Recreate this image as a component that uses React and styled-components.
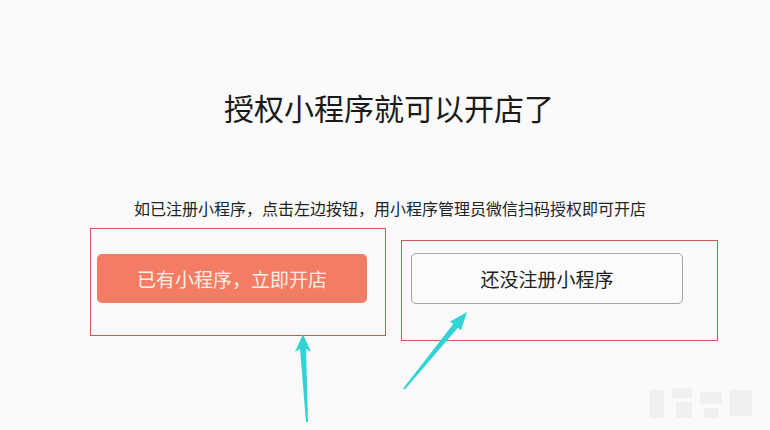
import styled, { createGlobalStyle } from "styled-components";

const GlobalStyle = createGlobalStyle`
  html, body {
    margin: 0;
    padding: 0;
    background: #fafafa;
  }
  body {
    font-family: "Noto Sans CJK SC", "Noto Sans", sans-serif;
  }
`;

const Page = styled.div`
  position: relative;
  width: 770px;
  height: 430px;
  overflow: hidden;
  background: #fafafa;
  display: flex;
  flex-direction: column;
  align-items: center;
  padding-top: 89px;
  box-sizing: border-box;
`;

const Title = styled.h1`
  margin: 0 0 0 8px;
  font-size: 30px;
  line-height: 36px;
  font-weight: 400;
  color: #1a1a1a;
`;

const Hint = styled.p`
  margin: 73px 0 0 10px;
  font-size: 16px;
  line-height: 20px;
  color: #222;
`;

const Row = styled.div`
  display: flex;
  align-items: flex-start;
  gap: 15px;
  margin: 10px 0 0 38px;
`;

const Frame = styled.div`
  border: 1px solid #c45a56;
  padding: ${({ $pad }) => $pad};
  margin-top: ${({ $top }) => $top || "0"};
`;

const Button = styled.button`
  display: flex;
  align-items: center;
  justify-content: center;
  width: ${({ $w }) => $w};
  height: ${({ $h }) => $h};
  border-radius: 5px;
  font-family: inherit;
  font-size: ${({ $size }) => $size};
  cursor: pointer;
  border: ${({ $primary }) => ($primary ? "none" : "1px solid #a5a5a5")};
  background: ${({ $primary }) => ($primary ? "#f27d64" : "#fbfbfb")};
  color: ${({ $primary }) => ($primary ? "#fdeee4" : "#1e1e1e")};
`;

const Overlay = styled.svg`
  position: absolute;
  left: 0;
  top: 0;
  pointer-events: none;
`;

export default function App() {
  return (
    <>
      <GlobalStyle />
      <Page>
        <Title>授权小程序就可以开店了</Title>
        <Hint>如已注册小程序，点击左边按钮，用小程序管理员微信扫码授权即可开店</Hint>
        <Row>
          <Frame $pad="25px 18px 32px 6px">
            <Button $primary $w="270px" $h="49px" $size="19px">
              已有小程序，立即开店
            </Button>
          </Frame>
          <Frame $pad="12px 34px 36px 9px" $top="12px">
            <Button $w="272px" $h="51px" $size="19px">
              还没注册小程序
            </Button>
          </Frame>
        </Row>
        <Overlay width="770" height="430" viewBox="0 0 770 430">
          <polygon
            fill="#31d3d6"
            points="303,334 311,352 306,349 308,422 306,422 300,349 295,352"
          />
          <polygon
            fill="#31d3d6"
            points="467,312 461,330.3 457.9,327.8 404.8,389.6 403.2,388.4 453.3,324 450.2,321.5"
          />
          <g fill="#ececec" opacity="0.7">
            <rect x="650" y="390" width="14" height="28" />
            <rect x="672" y="388" width="20" height="10" />
            <rect x="676" y="402" width="16" height="16" />
            <rect x="700" y="392" width="22" height="12" />
            <rect x="704" y="408" width="14" height="10" />
            <rect x="730" y="390" width="22" height="26" />
          </g>
        </Overlay>
      </Page>
    </>
  );
}
